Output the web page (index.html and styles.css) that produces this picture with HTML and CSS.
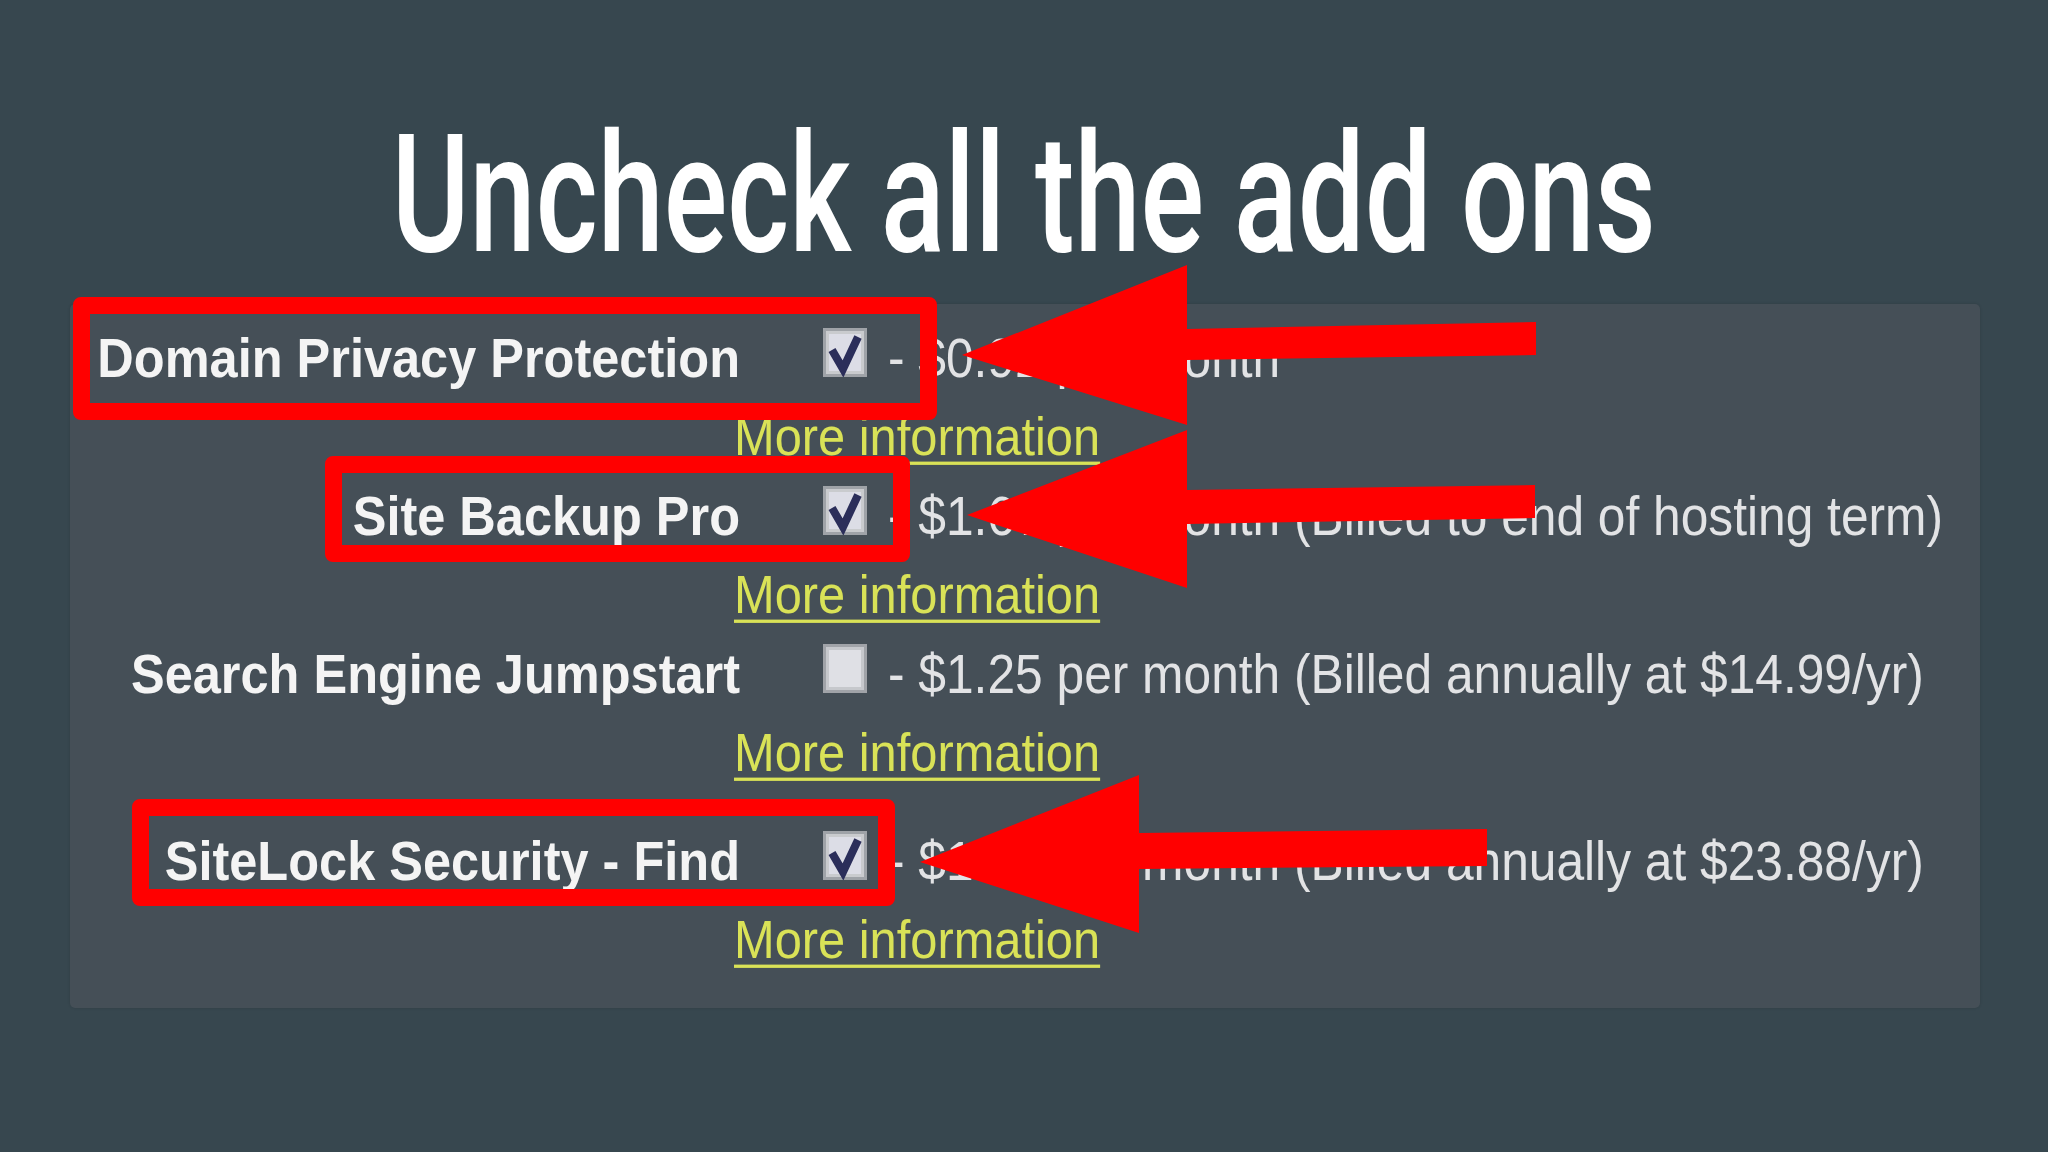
FILE: index.html
```html
<!DOCTYPE html>
<html>
<head>
<meta charset="utf-8">
<title>Uncheck all the add ons</title>
<link rel="stylesheet" href="styles.css">
</head>
<body>
<h1 class="title"><span class="title-text">Uncheck all the add ons</span></h1>
<div class="panel">
  <div class="row"><span class="label">Domain Privacy Protection</span><svg class="cb" viewBox="0 0 44 49"><rect x="1.5" y="1.5" width="41" height="46" fill="#c9cbce" stroke="#9fa3a8" stroke-width="3"/><rect x="6" y="6" width="32" height="37" fill="#dcdde6"/><polyline points="9,22 20,41 35,9" fill="none" stroke="#2b2e5a" stroke-width="8" stroke-linejoin="miter"/></svg><span class="price">- $0.92 per month</span></div>
  <div class="more-line"><a class="more" href="#">More information</a></div>
  <div class="row"><span class="label">Site Backup Pro</span><svg class="cb" viewBox="0 0 44 49"><rect x="1.5" y="1.5" width="41" height="46" fill="#c9cbce" stroke="#9fa3a8" stroke-width="3"/><rect x="6" y="6" width="32" height="37" fill="#dcdde6"/><polyline points="9,22 20,41 35,9" fill="none" stroke="#2b2e5a" stroke-width="8" stroke-linejoin="miter"/></svg><span class="price">- $1.67 per month (Billed to end of hosting term)</span></div>
  <div class="more-line"><a class="more" href="#">More information</a></div>
  <div class="row"><span class="label">Search Engine Jumpstart</span><svg class="cb" viewBox="0 0 44 49"><rect x="1.5" y="1.5" width="41" height="46" fill="#c6c8cc" stroke="#a0a3a8" stroke-width="3"/><rect x="6" y="6" width="32" height="37" fill="#dfe0e5"/></svg><span class="price">- $1.25 per month (Billed annually at $14.99/yr)</span></div>
  <div class="more-line"><a class="more" href="#">More information</a></div>
  <div class="row row-last"><span class="label">SiteLock Security - Find</span><svg class="cb" viewBox="0 0 44 49"><rect x="1.5" y="1.5" width="41" height="46" fill="#c9cbce" stroke="#9fa3a8" stroke-width="3"/><rect x="6" y="6" width="32" height="37" fill="#dcdde6"/><polyline points="9,22 20,41 35,9" fill="none" stroke="#2b2e5a" stroke-width="8" stroke-linejoin="miter"/></svg><span class="price">- $1.99 per month (Billed annually at $23.88/yr)</span></div>
  <div class="more-line"><a class="more" href="#">More information</a></div>

  <div class="hl hl-1"></div>
  <div class="hl hl-2"></div>
  <div class="hl hl-3"></div>
</div>
<svg class="arrows" viewBox="0 0 2048 1152">
  <polygon points="962,355 1187,265 1187,329 1536,322 1536,355 1187,360 1187,425" fill="#ff0000"/>
  <polygon points="967,515 1187,430 1187,490 1535,485 1535,518 1187,524 1187,588" fill="#ff0000"/>
  <polygon points="920,862 1139,775 1139,833 1487,829 1487,866 1139,869 1139,933" fill="#ff0000"/>
</svg>
</body>
</html>
```
FILE: styles.css
```css
html, body {
  margin: 0;
  padding: 0;
}
body {
  width: 2048px;
  height: 1152px;
  overflow: hidden;
  background: #37474f;
  font-family: "Liberation Sans", Arial, sans-serif;
  position: relative;
}
.title {
  margin: 0;
  padding-top: 112px;
  height: 165px;
  line-height: 165px;
  font-family: Roboto, "Liberation Sans", sans-serif;
  font-weight: 500;
  font-size: 165px;
  color: #ffffff;
  text-align: center;
  white-space: nowrap;
}
.title-text {
  display: inline-block;
  transform: scaleX(0.72);
}
.panel {
  position: relative;
  box-sizing: border-box;
  margin: 27px 0 0 70px;
  width: 1910px;
  height: 704px;
  padding-top: 16px;
  background: #454f57;
  border-radius: 5px;
  box-shadow: 0 0 3px rgba(0,0,0,0.15);
}
.row {
  height: 79px;
  line-height: 79px;
  font-size: 50px;
  white-space: nowrap;
}
.row-last {
  margin-top: 29px;
}
.label {
  display: inline-block;
  width: 670px;
  text-align: right;
  font-weight: bold;
  font-size: 50.5px;
  color: #f4f4f4;
  transform: scaleY(1.1);
  transform-origin: 50% 57px;
}
.cb {
  width: 44px;
  height: 49px;
  margin-left: 83px;
  vertical-align: baseline;
}
.price {
  display: inline-block;
  margin-left: 21px;
  font-size: 49.7px;
  color: #e2e3e5;
  transform: scaleY(1.1);
  transform-origin: 50% 57px;
}
.more-line {
  height: 79px;
  line-height: 79px;
  padding-left: 664px;
  white-space: nowrap;
}
.more {
  display: inline-block;
  font-size: 48.8px;
  color: #d9e257;
  text-decoration: underline;
  text-decoration-thickness: 3px;
  text-underline-offset: 6px;
  transform: scaleY(1.1);
  transform-origin: 50% 56px;
}
.hl {
  position: absolute;
  box-sizing: border-box;
  border: 17px solid #ff0000;
  border-radius: 8px;
}
.hl-1 {
  left: 3px;
  top: -7px;
  width: 864px;
  height: 123px;
}
.hl-2 {
  left: 255px;
  top: 152px;
  width: 585px;
  height: 106px;
}
.hl-3 {
  left: 62px;
  top: 495px;
  width: 763px;
  height: 107px;
}
.arrows {
  position: absolute;
  left: 0;
  top: 0;
  width: 2048px;
  height: 1152px;
  pointer-events: none;
}
```
